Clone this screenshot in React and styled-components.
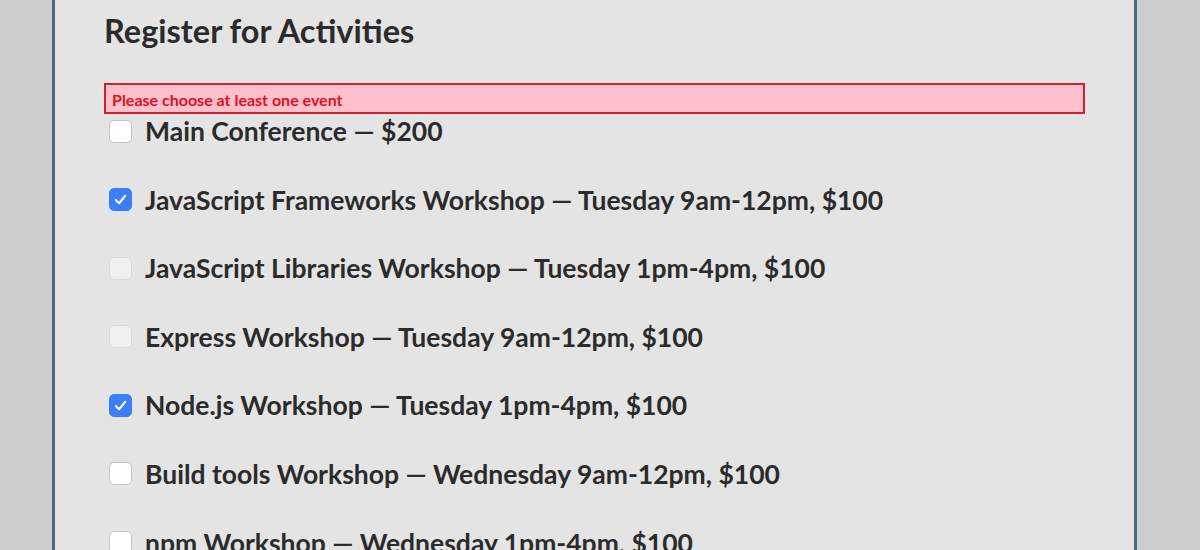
import React from "react";
import styled, { createGlobalStyle } from "styled-components";

const Global = createGlobalStyle`
  html, body { margin: 0; padding: 0; background: #cdcdcd; }
  body { font-family: Lato, "Noto Sans", sans-serif; height: 550px; overflow: hidden; }
`;

const Page = styled.div`
  padding-left: 52px;
`;

const Panel = styled.fieldset`
  box-sizing: border-box;
  width: 1085px;
  min-height: 550px;
  margin: 0;
  padding: 10px 49px 0;
  background: #e4e4e4;
  border: none;
  border-left: 3px solid #4b6c80;
  border-right: 3px solid #4b6c80;
  color: #2b2b2b;
`;

const Heading = styled.h2`
  margin: 0;
  font-size: 32.5px;
  line-height: 42px;
  font-weight: 700;
  color: #2b2b2b;
`;

const ErrorBox = styled.div`
  box-sizing: border-box;
  margin-top: 31px;
  height: 31px;
  background: #ffc0cb;
  border: 2px solid #d3202e;
  padding: 4px 0 0 6px;
  font-size: 16px;
  font-weight: 700;
  line-height: 21px;
  color: #e0101e;
`;

const Row = styled.label`
  display: flex;
  align-items: center;
  height: 34px;
  margin-bottom: 34.6px;
  padding-left: 5px;
  font-size: 26.5px;
  font-weight: 700;
  color: #2b2b2b;
`;

const Box = styled.span`
  box-sizing: border-box;
  flex: none;
  width: 23px;
  height: 23px;
  margin-right: 13px;
  border-radius: 5px;
  display: flex;
  align-items: center;
  justify-content: center;
  background: ${(p) => (p.$checked ? "#3a7ff6" : p.$disabled ? "#efefef" : "#ffffff")};
  border: 1px solid ${(p) => (p.$checked ? "#3a7ff6" : p.$disabled ? "#d9d9d9" : "#c4c4c4")};
`;

const items = [
  { text: "Main Conference — $200" },
  { text: "JavaScript Frameworks Workshop — Tuesday 9am-12pm, $100", checked: true },
  { text: "JavaScript Libraries Workshop — Tuesday 1pm-4pm, $100", disabled: true },
  { text: "Express Workshop — Tuesday 9am-12pm, $100", disabled: true },
  { text: "Node.js Workshop — Tuesday 1pm-4pm, $100", checked: true },
  { text: "Build tools Workshop — Wednesday 9am-12pm, $100" },
  { text: "npm Workshop — Wednesday 1pm-4pm, $100" },
];

export default function App() {
  return (
    <Page>
      <Global />
      <Panel>
        <Heading>Register for Activities</Heading>
        <ErrorBox>Please choose at least one event</ErrorBox>
        {items.map((it) => (
          <Row key={it.text}>
            <Box $checked={it.checked} $disabled={it.disabled}>
              {it.checked && (
                <svg width="15" height="15" viewBox="0 0 16 16">
                  <path d="M3 8.5 L6.5 12 L13 4" fill="none" stroke="#fff" strokeWidth="2.2" strokeLinecap="round" strokeLinejoin="round" />
                </svg>
              )}
            </Box>
            {it.text}
          </Row>
        ))}
      </Panel>
    </Page>
  );
}
